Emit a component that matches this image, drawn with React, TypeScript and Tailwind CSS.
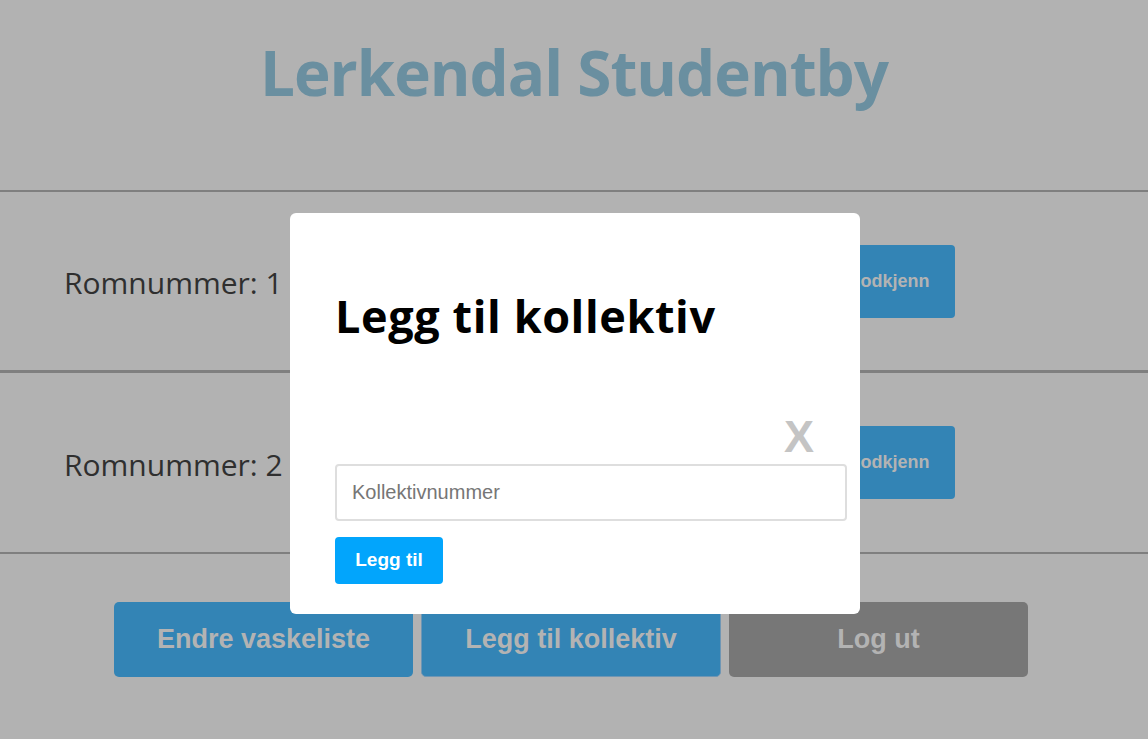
import React from "react";

function Row({ n, thick }: { n: number; thick?: boolean }) {
  return (
    <div className={`flex h-[181px] items-center justify-between pl-[64px] pr-[193px] ${thick ? "border-b-[3px]" : "border-b-2"} border-[#7f7f7f]`}>
      <span className="mt-[3px] font-['Open_Sans','Noto_Sans',sans-serif] text-[30px] text-[#2f2f2f]">
        Romnummer: {n}
      </span>
      <button className="h-[73px] w-[134px] rounded-[4px] bg-[#3384b5] font-['Liberation_Sans',Arial,sans-serif] text-[18px] font-bold text-[#b3b3b3]">
        Godkjenn
      </button>
    </div>
  );
}

export default function App() {
  return (
    <div className="relative min-h-[739px] w-full bg-[#b2b2b2]">
      <div className="flex h-[192px] justify-center border-b-2 border-[#7f7f7f] pt-[30px]">
        <h1 className="font-['Open_Sans','Noto_Sans',sans-serif] text-[62px] font-bold leading-[84px] tracking-[-1px] text-[#6a8fa0]">
          Lerkendal Studentby
        </h1>
      </div>
      <Row n={1} thick />
      <Row n={2} />
      <div className="mt-[48px] flex justify-center gap-[8px] pr-[6px] font-['Liberation_Sans',Arial,sans-serif] text-[27px] font-bold text-[#b3b3b3]">
        <button className="h-[75px] w-[299px] rounded-[5px] bg-[#3384b5]">Endre vaskeliste</button>
        <button className="h-[75px] w-[300px] rounded-[5px] border border-[#6f96b4] bg-[#3384b5]">Legg til kollektiv</button>
        <button className="h-[75px] w-[299px] rounded-[5px] bg-[#777777]">Log ut</button>
      </div>

      <div className="absolute left-[290px] top-[213px] flex h-[401px] w-[570px] flex-col rounded-[6px] bg-white pl-[45px] pr-[13px]">
        <h2 className="mt-[79px] font-['Open_Sans','Noto_Sans',sans-serif] text-[45px] font-bold leading-[48px] tracking-[0.6px] text-black">
          Legg til kollektiv
        </h2>
        <div className="mt-[75px] flex justify-end pr-[33px]">
          <span className="font-['Liberation_Sans',Arial,sans-serif] text-[45px] font-bold leading-[44px] text-[#c4c4c4]">X</span>
        </div>
        <input
          className="mt-[5px] h-[57px] w-[512px] rounded-[4px] border-2 border-[#dedede] px-[15px] font-['Liberation_Sans',Arial,sans-serif] text-[20px] text-[#333] outline-none placeholder:text-[#767676]"
          placeholder="Kollektivnummer"
        />
        <button className="mt-[16px] h-[47px] w-[108px] rounded-[4px] bg-[#02a5fc] font-['Liberation_Sans',Arial,sans-serif] text-[19px] font-bold text-white">
          Legg til
        </button>
      </div>
    </div>
  );
}
